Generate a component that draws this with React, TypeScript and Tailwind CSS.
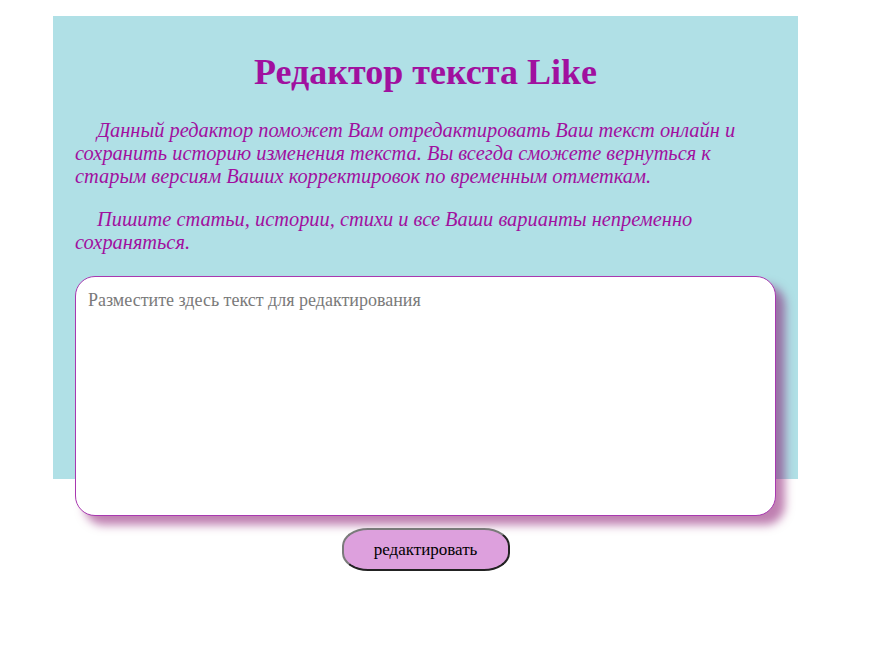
import React from 'react';

const App: React.FC = () => {
  return (
    <div className="min-h-[651px] bg-white pt-[16px] font-['Liberation_Serif','Times_New_Roman',serif]">
      <div className="ml-[53px] w-[745px] h-[463px] bg-[#b0e0e6] px-[22px] pt-[36px]">
        <h1 className="text-center text-[36px] leading-[1.15] font-bold text-[#a0109f]">
          Редактор текста Like
        </h1>

        <p className="mt-[26px] indent-[22px] text-[20.4px] leading-[23px] italic text-[#a0109f]">
          Данный редактор поможет Вам отредактировать Ваш текст онлайн и сохранить историю изменения
          текста. Вы всегда сможете вернуться к старым версиям Ваших корректировок по временным отметкам.
        </p>
        <p className="mt-[20px] indent-[22px] text-[20.4px] leading-[23px] italic text-[#a0109f]">
          Пишите статьи, истории, стихи и все Ваши варианты непременно сохраняться.
        </p>

        <textarea
          className="mt-[22px] block w-full h-[240px] resize-none rounded-[20px] border border-[#a838b0] bg-white px-3 pt-[10px] text-[18px] text-black outline-none shadow-[9px_9px_10px_rgba(128,0,100,0.5)] placeholder:text-[#7a7a7a] font-['Liberation_Serif','Times_New_Roman',serif]"
          placeholder="Разместите здесь текст для редактирования"
        />

        <div className="mt-[12px] flex justify-center">
          <button className="w-[168px] h-[43px] rounded-[26px_/_18px] border-2 border-t-[#7a7a7a] border-l-[#7a7a7a] border-b-[#222222] border-r-[#222222] bg-[#dda0dd] text-[17px] text-black font-['Liberation_Serif','Times_New_Roman',serif]">
            редактировать
          </button>
        </div>
      </div>
    </div>
  );
};

export default App;
